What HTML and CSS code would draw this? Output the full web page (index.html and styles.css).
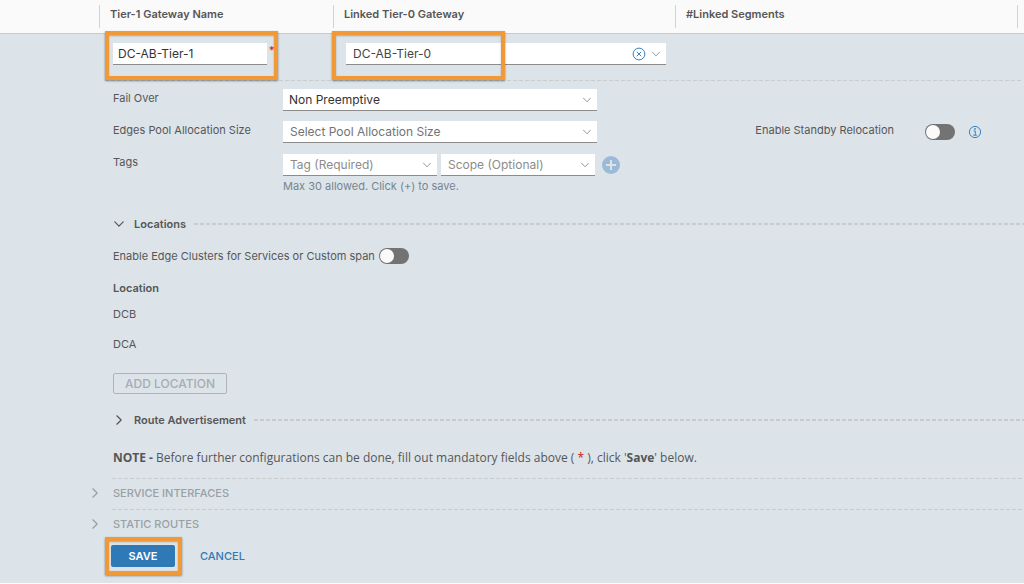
FILE: index.html
```html
<!DOCTYPE html>
<html lang="en">
<head>
<meta charset="utf-8">
<title>Tier-1 Gateways</title>
<link rel="stylesheet" href="styles.css">
</head>
<body>
<svg class="sprite" aria-hidden="true">
  <symbol id="chevron" viewBox="0 0 10 10"><path d="M1.5 3.2 5 6.8 8.5 3.2" fill="none" stroke="currentColor" stroke-width="1" stroke-linecap="round" stroke-linejoin="round"/></symbol>
</svg>
<header class="columns">
  <div class="column"></div>
  <div class="column">Tier-1 Gateway Name</div>
  <div class="column">Linked Tier-0 Gateway</div>
  <div class="column">#Linked Segments</div>
  <div class="column"></div>
</header>
<main>
<form class="editor">
  <div class="columns identity">
    <div></div>
    <div class="name-cell">
      <input class="text-field" type="text" value="DC-AB-Tier-1" aria-label="Tier-1 Gateway Name">
      <span class="required">*</span>
      <span class="highlight highlight-name"></span>
    </div>
    <div class="linked-cell">
      <div class="picker">
        <select aria-label="Linked Tier-0 Gateway"><option>DC-AB-Tier-0</option></select>
        <button class="clear" type="button" aria-label="Clear">
          <svg viewBox="0 0 14 14"><circle cx="7" cy="7" r="5.9"/><path d="m4.8 4.8 4.4 4.4m0-4.4L4.8 9.2"/></svg>
        </button>
        <svg class="arrow"><use href="#chevron"/></svg>
      </div>
      <span class="highlight highlight-linked"></span>
    </div>
  </div>
  <hr class="dash dash-top">

  <div class="settings">
    <div class="fields">
      <label for="failover">Fail Over</label>
      <div class="picker dark"><select id="failover"><option>Non Preemptive</option></select><svg class="arrow"><use href="#chevron"/></svg></div>
      <label for="pool">Edges Pool Allocation Size</label>
      <div class="picker"><select id="pool"><option>Select Pool Allocation Size</option></select><svg class="arrow"><use href="#chevron"/></svg></div>
      <label for="tag">Tags</label>
      <div>
        <div class="tags">
          <div class="picker pale"><select id="tag"><option>Tag (Required)</option></select><svg class="arrow"><use href="#chevron"/></svg></div>
          <div class="picker pale"><select aria-label="Scope"><option>Scope (Optional)</option></select><svg class="arrow"><use href="#chevron"/></svg></div>
          <button class="add" type="button" aria-label="Add tag"><svg viewBox="0 0 18 18"><circle cx="9" cy="9" r="9" fill="#9abad7"/><path d="M9 4v10M4 9h10" stroke="#dce4ea" stroke-width="2"/></svg></button>
        </div>
        <p class="hint">Max 30 allowed. Click (+) to save.</p>
      </div>
    </div>
    <div class="standby">
      <label for="standby">Enable Standby Relocation</label>
      <input class="switch" id="standby" type="checkbox">
      <button class="info" type="button" aria-label="More information">
        <svg viewBox="0 0 14 14"><circle cx="7" cy="7" r="5.6"/><path d="M5.5 6H7.3V10M5.3 10.2H8.9"/><circle class="dot" cx="7" cy="3.9" r=".9"/></svg>
      </button>
    </div>
  </div>

  <section class="group">
    <h2 class="group-title"><button type="button"><svg class="toggle-icon"><use href="#chevron"/></svg>Locations</button></h2>
    <div class="group-body">
      <div class="span-row">
        <label for="span">Enable Edge Clusters for Services or Custom span</label>
        <input class="switch" id="span" type="checkbox">
      </div>
      <h3>Location</h3>
      <ul class="locations"><li>DCB</li><li>DCA</li></ul>
      <button class="outline" type="button" disabled>ADD LOCATION</button>
    </div>
    <h2 class="group-title"><button type="button"><svg class="toggle-icon closed"><use href="#chevron"/></svg>Route Advertisement</button></h2>
  </section>

  <p class="note"><b>NOTE -</b> Before further configurations can be done, fill out mandatory fields above ( <span class="required">*</span> ), click '<b>Save</b>' below.</p>

  <div class="section"><button type="button" disabled><svg class="toggle-icon closed"><use href="#chevron"/></svg>SERVICE INTERFACES</button></div>
  <div class="section"><button type="button" disabled><svg class="toggle-icon closed"><use href="#chevron"/></svg>STATIC ROUTES</button></div>

  <div class="actions">
    <div class="save-wrap"><button class="save" type="submit">SAVE</button><span class="highlight highlight-save"></span></div>
    <button class="cancel" type="button">CANCEL</button>
  </div>
</form>
</main>
</body>
</html>
```
FILE: styles.css
```css
* { box-sizing: border-box; }

body {
  margin: 0;
  background: #fafafa;
  color: #565656;
  font: 11px/18px Inter, "Open Sans", sans-serif;
}

h2, h3, p, ul { margin: 0; padding: 0; font-size: 11px; }
ul { list-style: none; }
input, select, button { font: inherit; color: inherit; margin: 0; }
button { padding: 0; border: 0; background: none; }
svg { display: block; }
.sprite { position: absolute; width: 0; height: 0; }

.columns {
  display: grid;
  grid-template-columns: 99px 234px 342px 342px 1fr;
}

header.columns {
  padding: 5px 0;
  border-bottom: 1px solid #c5cacc;
}

.column {
  height: 23px;
  padding-left: 10px;
  font-weight: 600;
}
.column + .column { border-left: 1px solid #d3d3d3; }

.editor { padding-bottom: 16px; background: #dce4ea; }

.identity { padding-top: 9px; height: 46px; }
.name-cell, .linked-cell { position: relative; display: flex; align-items: flex-start; }
.name-cell { padding-left: 14px; }
.linked-cell { padding: 0 9px 0 13px; }
.linked-cell .picker { flex: 1; }

.text-field {
  width: 154px;
  height: 22px;
  padding: 0 5px;
  border: 0;
  border-bottom: 1px solid #8c8c8c;
  border-radius: 0;
  background: #fff;
  color: #333;
  font-size: 12px;
}

.required { color: #c92100; }
.name-cell .required { padding-left: 2px; line-height: 14px; }

.highlight {
  position: absolute;
  z-index: 1;
  border: 4px solid #f19937;
  box-shadow: 0 1px 2px #0006, inset 0 1px 2px #0004;
  pointer-events: none;
}
.highlight-name { inset: -12px 55px 0 6px; }
.highlight-linked { inset: -12px 170px 0 -1px; }
.highlight-save { inset: -8px -7px -8px -6px; }

.picker { position: relative; color: #737373; }
.picker.dark { color: #333; }
.picker.pale { color: #8c8c8c; }
.linked-cell .picker { color: #444; }
.picker select {
  display: block;
  width: 100%;
  height: 22px;
  padding: 0 24px 0 7px;
  border: 0;
  border-bottom: 1px solid #8c8c8c;
  border-radius: 0;
  background: #fff;
  font-size: 12px;
  appearance: none;
}
.picker.dark select { padding-left: 6px; }
.arrow {
  position: absolute;
  top: 6px;
  right: 5px;
  width: 10px;
  height: 10px;
  color: #8a9aa5;
  pointer-events: none;
}
.clear { position: absolute; top: 4px; right: 20px; }
.clear svg, .info svg { width: 14px; height: 14px; fill: none; stroke: #3882c4; }
.info .dot { fill: #3882c4; stroke: none; }

.dash, .group-title::after, .section {
  background: repeating-linear-gradient(90deg, #c8cccd 0 4px, transparent 4px 6px) top / 100% 1px no-repeat;
}
.dash { height: 1px; margin: 0 2px 0 105px; border: 0; }

.settings {
  display: flex;
  justify-content: space-between;
  padding: 8px 42px 0 113px;
}
.fields {
  display: grid;
  grid-template-columns: 170px 314px;
  row-gap: 10px;
}
.tags { display: grid; grid-template-columns: 154px 154px 21px; column-gap: 4px; padding-top: 1px; }
.add { align-self: center; justify-self: end; width: 18px; height: 18px; }
.hint { padding-top: 1px; color: #75848e; }

.standby { display: flex; align-items: flex-start; padding-top: 32px; }
.standby .switch { margin: 3px 13px 0 31px; }
.info { margin-top: 4px; }

.switch {
  appearance: none;
  width: 30px;
  height: 16px;
  padding: 1px;
  border-radius: 8px;
  background: #737373;
}
.switch::before {
  content: "";
  display: block;
  width: 14px;
  height: 14px;
  border-radius: 50%;
  background: #fafafa;
}

.group { padding-top: 20px; }
.group-title {
  display: flex;
  align-items: center;
  gap: 8px;
  padding-left: 113px;
  font-weight: 600;
}
.group-title::after { content: ""; flex: 1; height: 2px; background-size: 100% 2px; }
.group-title button { display: flex; align-items: center; gap: 9px; }
.toggle-icon { width: 12px; height: 12px; }
.closed { transform: rotate(-90deg); }

.group-body { padding: 14px 0 17px 113px; }
.span-row { display: flex; align-items: center; gap: 4px; }
.group-body h3 { padding-top: 14px; font-weight: 600; }
.locations { display: grid; gap: 12px; padding: 8px 0 20px; }
.outline {
  height: 21px;
  padding: 0 11px;
  border: 1px solid #aeb4b6;
  border-radius: 2px;
  color: #a6adb1;
  font-size: 12px;
  font-weight: 500;
  line-height: 19px;
}

.note { padding: 20px 0 11px 113px; font-family: "Open Sans", sans-serif; font-size: 12px; }

.section {
  height: 31px;
  margin: 0 2px 0 112px;
  padding-top: 6px;
  color: #99a0a4;
}
.section button { display: flex; align-items: center; gap: 12px; margin-left: -23px; font-weight: 500; }

.actions { display: flex; align-items: center; gap: 25px; padding: 5px 0 0 111px; }
.save-wrap { position: relative; }
.save {
  display: block;
  width: 64px;
  height: 22px;
  border-radius: 2px;
  background: #3079b7;
  color: #fff;
  font-weight: 600;
}
.cancel { color: #3079b7; font-weight: 500; }
```
